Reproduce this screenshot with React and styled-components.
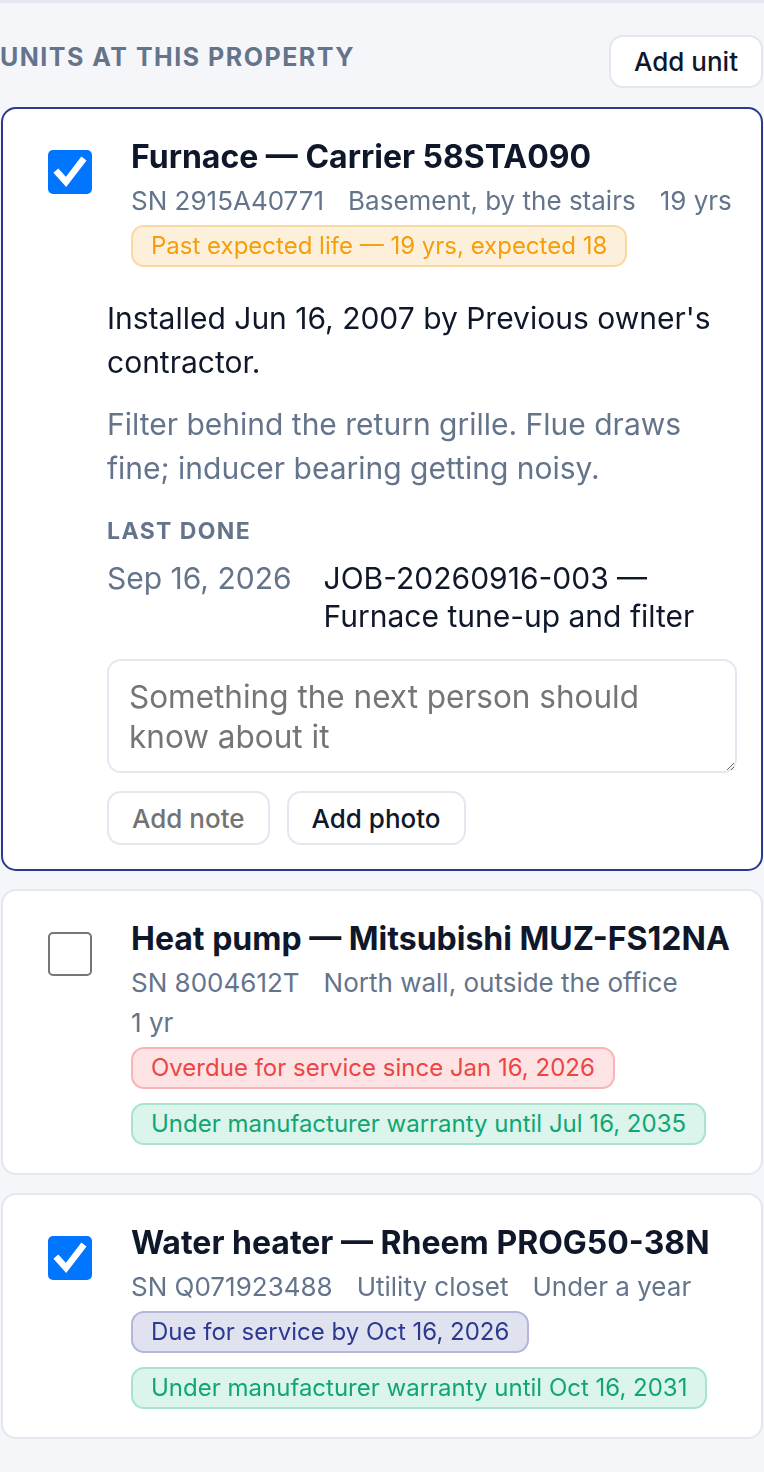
import React from 'react'
import styled, { createGlobalStyle } from 'styled-components'

const GlobalStyle = createGlobalStyle`
  html, body { margin: 0; padding: 0; background: #f5f6fa; }
  body { font-family: Inter, "Noto Sans", sans-serif; color: #0f172a; }
  * { box-sizing: border-box; }
`

const Page = styled.div`
  border-top: 3px solid #e3e7ef;
  padding: 32px 1px 40px 0;
  min-height: 1472px;
`

const Head = styled.div`
  display: flex;
  justify-content: space-between;
  align-items: flex-start;
  margin-bottom: 19px;
`

const HeadTitle = styled.h2`
  margin: 7px 0 0;
  font-size: 25px;
  line-height: 30px;
  font-weight: 700;
  letter-spacing: 1.5px;
  color: #64748b;
  text-transform: uppercase;
`

const Button = styled.button`
  height: ${p => p.$tall ? '53px' : '54px'};
  padding: 0 23px;
  background: #fff;
  border: 2px solid #e3e7ef;
  border-radius: 14px;
  font-family: inherit;
  font-size: 26px;
  font-weight: 500;
  color: ${p => p.$muted ? '#737373' : '#0f172a'};
  cursor: pointer;
`

const List = styled.div`
  display: flex;
  flex-direction: column;
  gap: 18px;
  padding-left: 1px;
`

const Card = styled.div`
  background: #fff;
  border: 2px solid ${p => p.$active ? '#2b3990' : '#e3e7ef'};
  border-radius: 15px;
  padding: ${p => p.$active ? '29px 24px 24px 0' : '29px 24px 28px 0'};
`

const Top = styled.div`
  display: flex;
  align-items: flex-start;
  gap: 39px;
  padding-left: 45px;
`

const Box = styled.span`
  flex: none;
  width: 44px;
  height: 44px;
  margin-top: 12px;
  border-radius: 5px;
  background: ${p => p.$on ? '#0075ff' : '#fff'};
  border: ${p => p.$on ? 'none' : '2.5px solid #767676'};
  display: flex;
  align-items: center;
  justify-content: center;
`

const Info = styled.div`
  flex: 1;
  min-width: 0;
`

const Title = styled.div`
  font-size: 32px;
  line-height: 38px;
  font-weight: 700;
  color: #0f172a;
`

const Meta = styled.div`
  display: flex;
  flex-wrap: wrap;
  column-gap: 24px;
  row-gap: 4px;
  margin-top: 7px;
  font-size: 26px;
  line-height: 36px;
  color: #64748b;
`

const tones = {
  amber: ['#fdf0db', '#fad8a2', '#f59e0b'],
  red: ['#fde3e4', '#f8b4b6', '#ef4444'],
  green: ['#dcf5ec', '#a8e4cb', '#10a672'],
  navy: ['#e1e2f0', '#b3b6d8', '#2b3990'],
}

const Badges = styled.div`
  display: flex;
  flex-direction: column;
  align-items: flex-start;
  gap: 14px;
  margin-top: 6px;
`

const Badge = styled.span`
  display: inline-block;
  padding: 0 18px;
  line-height: 38px;
  font-size: 24px;
  border-radius: 13px;
  background: ${p => tones[p.$tone][0]};
  border: 2px solid ${p => tones[p.$tone][1]};
  color: ${p => tones[p.$tone][2]};
`

const Details = styled.div`
  margin-left: 104px;
  padding-top: 29px;
`

const Text = styled.p`
  margin: 0 0 18px;
  font-size: 30px;
  line-height: 44px;
  color: ${p => p.$muted ? '#64748b' : '#0f172a'};
`

const Label = styled.div`
  margin-top: 27px;
  font-size: 23px;
  line-height: 28px;
  font-weight: 700;
  letter-spacing: 1.4px;
  color: #64748b;
`

const Done = styled.div`
  display: grid;
  grid-template-columns: auto 1fr;
  column-gap: 32px;
  margin-top: 14px;
  font-size: 30px;
  line-height: 38px;
`

const DoneDate = styled.span`
  color: #64748b;
`

const Note = styled.textarea`
  display: block;
  width: 100%;
  height: 114px;
  margin-top: 24px;
  padding: 16px 20px;
  border: 2px solid #e3e7ef;
  border-radius: 14px;
  font-family: inherit;
  font-size: 31.5px;
  line-height: 40px;
  color: #0f172a;
  resize: vertical;
  outline: none;
  &::placeholder { color: #757575; }
`

const Actions = styled.div`
  display: flex;
  gap: 17px;
  margin-top: 18px;
`

function Check({ on }) {
  return (
    <Box $on={on}>
      {on && (
        <svg width="44" height="44" viewBox="0 0 44 44">
          <path d="M10 23 L18 32 L34 11" fill="none" stroke="#fff" strokeWidth="6.5" strokeLinecap="square" strokeLinejoin="miter" />
        </svg>
      )}
    </Box>
  )
}

const units = [
  {
    id: 1,
    on: true,
    active: true,
    title: 'Furnace — Carrier 58STA090',
    meta: ['SN 2915A40771', 'Basement, by the stairs', '19 yrs'],
    badges: [['amber', 'Past expected life — 19 yrs, expected 18']],
  },
  {
    id: 2,
    on: false,
    title: 'Heat pump — Mitsubishi MUZ-FS12NA',
    meta: ['SN 8004612T', 'North wall, outside the office', '1 yr'],
    badges: [
      ['red', 'Overdue for service since Jan 16, 2026'],
      ['green', 'Under manufacturer warranty until Jul 16, 2035'],
    ],
  },
  {
    id: 3,
    on: true,
    title: 'Water heater — Rheem PROG50-38N',
    meta: ['SN Q071923488', 'Utility closet', 'Under a year'],
    badges: [
      ['navy', 'Due for service by Oct 16, 2026'],
      ['green', 'Under manufacturer warranty until Oct 16, 2031'],
    ],
  },
]

export default function App() {
  return (
    <>
      <GlobalStyle />
      <Page>
        <Head>
          <HeadTitle>Units at this property</HeadTitle>
          <Button $tall>Add unit</Button>
        </Head>
        <List>
          {units.map(u => (
            <Card key={u.id} $active={u.active}>
              <Top>
                <Check on={u.on} />
                <Info>
                  <Title>{u.title}</Title>
                  <Meta>
                    {u.meta.map(m => <span key={m}>{m}</span>)}
                  </Meta>
                  <Badges>
                    {u.badges.map(([tone, label]) => (
                      <Badge key={label} $tone={tone}>{label}</Badge>
                    ))}
                  </Badges>
                </Info>
              </Top>
              {u.active && (
                <Details>
                  <Text>Installed Jun 16, 2007 by Previous owner's contractor.</Text>
                  <Text $muted>Filter behind the return grille. Flue draws fine; inducer bearing getting noisy.</Text>
                  <Label>LAST DONE</Label>
                  <Done>
                    <DoneDate>Sep 16, 2026</DoneDate>
                    <span>JOB-20260916-003 — Furnace tune-up and filter</span>
                  </Done>
                  <Note placeholder="Something the next person should know about it" />
                  <Actions>
                    <Button $muted>Add note</Button>
                    <Button>Add photo</Button>
                  </Actions>
                </Details>
              )}
            </Card>
          ))}
        </List>
      </Page>
    </>
  )
}
